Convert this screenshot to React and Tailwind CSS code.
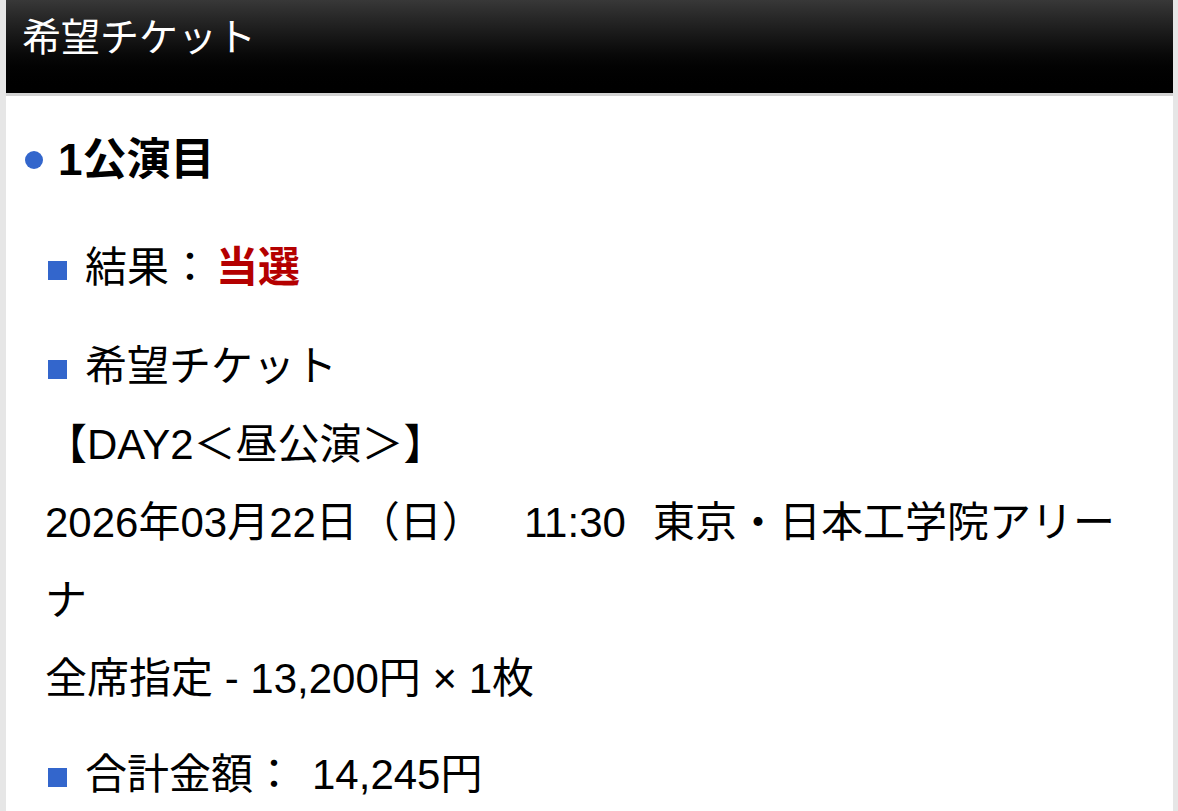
// Ticket request detail: dark title bar, then the lottery result for one performance
const FONT = { fontFamily: '"Liberation Sans", "Noto Sans CJK JP", sans-serif' };

function SquareItem({ children, className = '' }) {
  return (
    <div className={`flex items-center pl-[42px] leading-[78px] ${className}`}>
      <span className="block h-[19px] w-[19px] shrink-0 translate-y-[2px] bg-[#3366cc]" />
      <span className="ml-[18px]">{children}</span>
    </div>
  );
}

export default function App() {
  return (
    <div className="min-h-screen bg-[#e6e6e6] pl-[6px] pr-[5px] text-black" style={FONT}>
      <div className="min-h-[811px] bg-white">
        <header className="h-[96px] border-b-[3px] border-[#d2d2d2] bg-linear-to-b from-[#383838] via-[#0b0b0b] via-55% to-black pl-[16px] pt-[13px]">
          <h1 className="text-[39px] font-normal leading-[50px] text-white">希望チケット</h1>
        </header>

        <div className="pr-[30px] text-[42px]">
          {/* performance heading */}
          <div className="mt-[25px] flex items-center pl-[19px] leading-[78px]">
            <span className="block h-[18px] w-[18px] shrink-0 rounded-full bg-[#3366cc]" />
            <h2 className="ml-[15px] text-[44px] font-bold">1公演目</h2>
          </div>

          <SquareItem className="mt-[30px]">
            結果：<span className="ml-[5px] font-bold text-[#b40000]">当選</span>
          </SquareItem>

          <SquareItem className="mt-[21px]">希望チケット</SquareItem>

          <div className="pl-[39px] leading-[78px]">
            <p>【DAY2＜昼公演＞】</p>
            <p>
              2026年03月22日（日）<span className="ml-[40px]">11:30</span>
              <span className="ml-[27px]">東京・日本工学院アリーナ</span>
            </p>
            <p>全席指定 - 13,200円 × 1枚</p>
          </div>

          <SquareItem className="mt-[18px]">
            合計金額：<span className="ml-[17px]">14,245円</span>
          </SquareItem>
        </div>
      </div>
    </div>
  );
}
